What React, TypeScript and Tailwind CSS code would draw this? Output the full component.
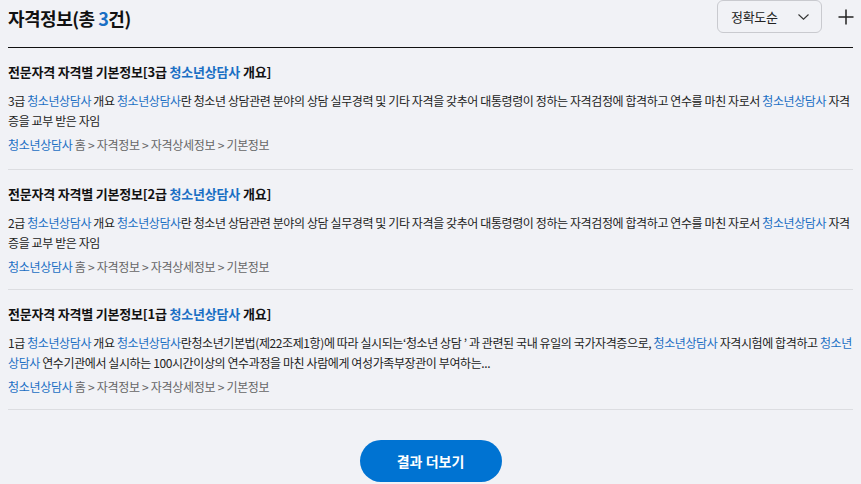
import type { ReactNode } from 'react';

const FONT = { fontFamily: '"Noto Sans CJK KR", "Noto Sans", sans-serif' };

function B({ children }: { children: ReactNode }) {
  return <span className="text-[#1a6fc4]">{children}</span>;
}

type Item = { title: ReactNode; body: ReactNode };

const items: Item[] = [
  {
    title: (
      <>
        전문자격 자격별 기본정보[3급 <B>청소년상담사</B> 개요]
      </>
    ),
    body: (
      <>
        3급 <B>청소년상담사</B> 개요 <B>청소년상담사</B>란 청소년 상담관련 분야의 상담 실무경력 및 기타 자격을 갖추어 대통령령이
        정하는 자격검정에 합격하고 연수를 마친 자로서 <B>청소년상담사</B> 자격증을 교부 받은 자임
      </>
    ),
  },
  {
    title: (
      <>
        전문자격 자격별 기본정보[2급 <B>청소년상담사</B> 개요]
      </>
    ),
    body: (
      <>
        2급 <B>청소년상담사</B> 개요 <B>청소년상담사</B>란 청소년 상담관련 분야의 상담 실무경력 및 기타 자격을 갖추어 대통령령이
        정하는 자격검정에 합격하고 연수를 마친 자로서 <B>청소년상담사</B> 자격증을 교부 받은 자임
      </>
    ),
  },
  {
    title: (
      <>
        전문자격 자격별 기본정보[1급 <B>청소년상담사</B> 개요]
      </>
    ),
    body: (
      <>
        1급 <B>청소년상담사</B> 개요 <B>청소년상담사</B>란청소년기본법(제22조제1항)에 따라 실시되는‘청소년 상담 ’ 과 관련된 국내
        유일의 국가자격증으로, <B>청소년상담사</B> 자격시험에 합격하고 <B>청소년상담사</B> 연수기관에서 실시하는 100시간이상의
        연수과정을 마친 사람에게 여성가족부장관이 부여하는...
      </>
    ),
  },
];

function ResultItem({ item, first }: { item: Item; first: boolean }) {
  return (
    <div className={`border-b border-[#dcdde1] pt-[14px] ${first ? 'pb-[14px]' : 'pb-[12px]'}`}>
      <h3 className="text-[13px] font-bold leading-[20px] tracking-[-0.2px] text-[#111]">{item.title}</h3>
      <p className="mt-[9px] text-[12px] leading-[20px] tracking-[-0.4px] text-[#222] break-all">{item.body}</p>
      <p className="mt-[4px] text-[12px] leading-[20px] tracking-[-0.3px] text-[#666]">
        <B>청소년상담사</B> 홈 &gt; 자격정보 &gt; 자격상세정보 &gt; 기본정보
      </p>
    </div>
  );
}

export default function App() {
  return (
    <div className="min-h-[484px] w-full bg-[#f1f2f6] px-2" style={FONT}>
      <div className="flex h-[48px] items-start justify-between border-b border-[#111]">
        <h2 className="mt-[6px] text-[18px] font-bold leading-[24px] tracking-[-0.5px] text-[#111]">
          자격정보(총 <span className="text-[#1a6fc4]">3</span>건)
        </h2>
        <div className="-mr-[1px] flex items-start">
          <div className="flex h-[33px] w-[105px] items-center justify-between rounded-[6px] border border-[#c9cacf] pl-[13px] pr-[12px]">
            <span className="text-[13px] tracking-[-0.3px] text-[#222]">정확도순</span>
            <svg width="11" height="6" viewBox="0 0 11 6" fill="none">
              <path d="M0.5 0.5 L5.5 5.2 L10.5 0.5" stroke="#333" strokeWidth="1.1" />
            </svg>
          </div>
          <svg className="ml-[16px] mt-[9px]" width="16" height="16" viewBox="0 0 16 16" fill="none">
            <path d="M8 0.5 V15.5 M0.5 8 H15.5" stroke="#222" strokeWidth="1.5" />
          </svg>
        </div>
      </div>
      {items.map((item, i) => (
        <ResultItem key={i} item={item} first={i === 0} />
      ))}
      <div className="flex justify-center pt-[30px]">
        <button className="h-[42px] w-[142px] rounded-full bg-[#0073d2] text-[14px] font-bold text-white">
          결과 더보기
        </button>
      </div>
    </div>
  );
}
